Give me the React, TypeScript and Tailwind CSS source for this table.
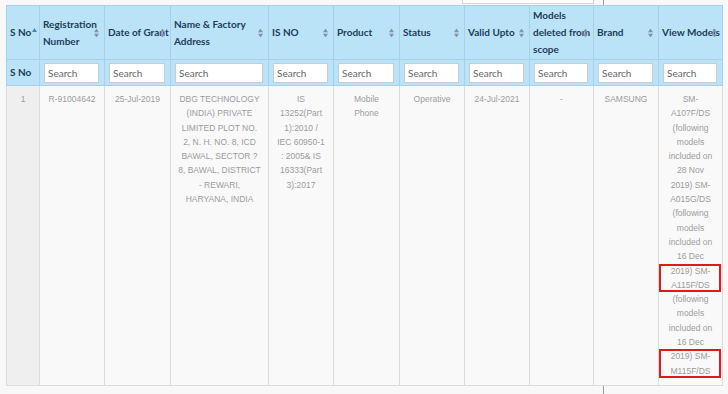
import type { ReactNode } from 'react';

const lato = { fontFamily: 'Lato, "Open Sans", sans-serif' };
const arial = { fontFamily: '"Liberation Sans", Arial, sans-serif' };

const widths = [33, 65, 66, 98, 65, 66, 65, 65, 64, 65, 64];

function SortIcon() {
  return (
    <svg width="5" height="9" viewBox="0 0 5 9" className="absolute right-[5px] top-1/2 -translate-y-1/2">
      <path d="M2.5 0 L5 3.8 L0 3.8 Z" fill="#8393a0" />
      <path d="M0 5.2 L5 5.2 L2.5 9 Z" fill="#8393a0" />
    </svg>
  );
}

function Head({ children, sort = true }: { children: ReactNode; sort?: boolean }) {
  return (
    <th className="relative border border-[#a6d2e9] px-[3px] py-px text-left align-middle text-[10px] font-bold leading-[17px] text-[#1d3c5a] whitespace-nowrap">
      {children}
      {sort && <SortIcon />}
    </th>
  );
}

function Lines({ lines }: { lines: string[] }) {
  return (
    <>
      {lines.map((l, i) => (
        <div key={i} className="whitespace-nowrap">{l}</div>
      ))}
    </>
  );
}

function Boxed({ lines }: { lines: string[] }) {
  return (
    <div className="relative">
      <Lines lines={lines} />
      <div className="absolute inset-y-0 -left-[3px] -right-[2px] border-2 border-[#e0191c]" />
    </div>
  );
}

export default function App() {
  return (
    <div className="relative h-[394px] w-[728px] overflow-hidden bg-[#f8f8f8]" style={lato}>
      {/* bits of the page behind the table */}
      <div className="absolute left-[603px] top-0 h-full w-px bg-[#9a9a9a]" />
      <div className="absolute left-[462px] top-[-10px] h-[14px] w-[132px] border border-[#d5d5d5] bg-white" />

      <div className="relative pl-[6px] pt-[5px]">
        <table className="table-fixed border-collapse" style={{ width: 716 }}>
          <colgroup>
            {widths.map((w, i) => (
              <col key={i} style={{ width: w }} />
            ))}
          </colgroup>
          <thead>
            <tr className="h-[54px] bg-[#bae3f8]">
              <th className="relative border border-[#a6d2e9] px-[3px] text-left align-middle text-[10px] font-bold leading-[17px] text-[#1d3c5a] whitespace-nowrap">
                S No
                <svg width="5" height="4" viewBox="0 0 5 4" className="ml-px inline-block -translate-y-[3px] align-middle">
                  <path d="M2.5 0 L5 4 L0 4 Z" fill="#3f86c8" />
                </svg>
              </th>
              <Head>Registration<br />Number</Head>
              <Head>Date of Grant</Head>
              <Head>Name &amp; Factory<br />Address</Head>
              <Head>IS NO</Head>
              <Head>Product</Head>
              <Head>Status</Head>
              <Head>Valid Upto</Head>
              <Head>Models<br />deleted from<br />scope</Head>
              <Head>Brand</Head>
              <Head>View Models</Head>
            </tr>
            <tr className="h-[26px] bg-[#bae3f8]">
              <th className="border border-[#a6d2e9] px-[3px] text-left text-[10px] font-bold text-[#1d3c5a]">S No</th>
              {widths.slice(1).map((_, i) => (
                <th key={i} className="border border-[#a6d2e9] pl-[4px] pr-[5px] align-middle">
                  <input
                    placeholder="Search"
                    className="block h-[20px] w-full border border-[#c4cdd3] bg-white px-[3px] text-[10px] font-normal text-[#555] outline-none placeholder:text-[#666]"
                    style={lato}
                  />
                </th>
              ))}
            </tr>
          </thead>
          <tbody style={arial}>
            <tr className="text-center align-top text-[8.5px] leading-[14.3px] text-[#9c9c9c]">
              <td className="border border-[#dcdcdc] bg-[#efeff0] px-[3px] pb-[7px] pt-[6px]">1</td>
              <td className="border border-[#dcdcdc] bg-[#f9f9fa] px-[3px] pt-[6px]">R-91004642</td>
              <td className="border border-[#dcdcdc] bg-[#f9f9fa] px-[3px] pt-[6px]">25-Jul-2019</td>
              <td className="border border-[#dcdcdc] bg-[#f9f9fa] px-[3px] pt-[6px]">
                <Lines
                  lines={[
                    'DBG TECHNOLOGY',
                    '(INDIA) PRIVATE',
                    'LIMITED PLOT NO.',
                    '2, N. H. NO. 8, ICD',
                    'BAWAL, SECTOR ?',
                    '8, BAWAL, DISTRICT',
                    '- REWARI,',
                    'HARYANA, INDIA',
                  ]}
                />
              </td>
              <td className="border border-[#dcdcdc] bg-[#f9f9fa] px-[3px] pt-[6px]">
                <Lines lines={['IS', '13252(Part', '1):2010 /', 'IEC 60950-1', ': 2005& IS', '16333(Part', '3):2017']} />
              </td>
              <td className="border border-[#dcdcdc] bg-[#f9f9fa] px-[3px] pt-[6px]">
                <Lines lines={['Mobile', 'Phone']} />
              </td>
              <td className="border border-[#dcdcdc] bg-[#f9f9fa] px-[3px] pt-[6px]">Operative</td>
              <td className="border border-[#dcdcdc] bg-[#f9f9fa] px-[3px] pt-[6px]">24-Jul-2021</td>
              <td className="border border-[#dcdcdc] bg-[#f9f9fa] px-[3px] pt-[6px]">-</td>
              <td className="border border-[#dcdcdc] bg-[#f9f9fa] px-[3px] pt-[6px]">SAMSUNG</td>
              <td className="border border-[#dcdcdc] bg-[#f9f9fa] px-[3px] pb-[7px] pt-[6px]">
                <Lines
                  lines={[
                    'SM-',
                    'A107F/DS',
                    '(following',
                    'models',
                    'included on',
                    '28 Nov',
                    '2019) SM-',
                    'A015G/DS',
                    '(following',
                    'models',
                    'included on',
                    '16 Dec',
                  ]}
                />
                <Boxed lines={['2019) SM-', 'A115F/DS']} />
                <Lines lines={['(following', 'models', 'included on', '16 Dec']} />
                <Boxed lines={['2019) SM-', 'M115F/DS']} />
              </td>
            </tr>
          </tbody>
        </table>
      </div>
    </div>
  );
}
